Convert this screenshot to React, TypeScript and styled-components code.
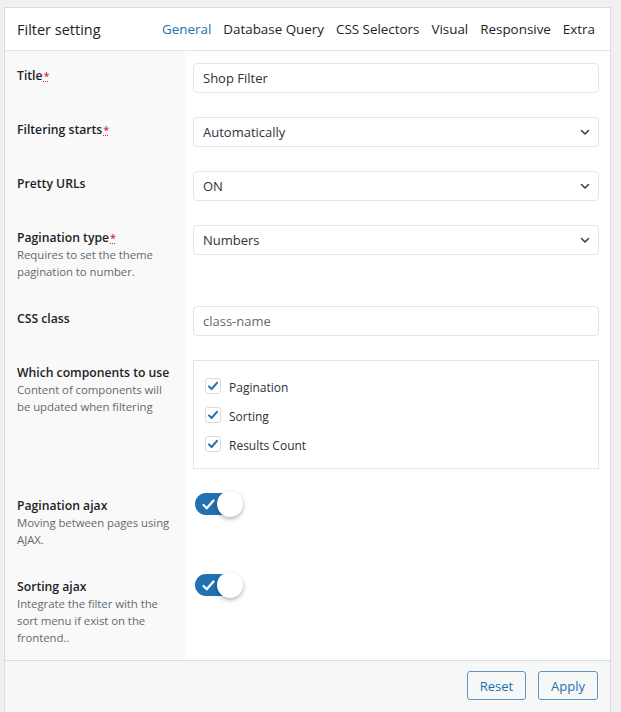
import React from 'react';
import styled, { createGlobalStyle } from 'styled-components';

const GlobalStyle = createGlobalStyle`
  body {
    margin: 0;
    background: #f0f0f1;
    font-family: "Open Sans", "Noto Sans", sans-serif;
    color: #1d2327;
  }
`;

const tabs = ['General', 'Database Query', 'CSS Selectors', 'Visual', 'Responsive', 'Extra'];

const Chevron = () => (
  <svg width="12" height="12" viewBox="0 0 12 12" fill="none">
    <path d="M2.5 4.5 6 8l3.5-3.5" stroke="#3c434a" strokeWidth="1.6" strokeLinecap="round" strokeLinejoin="round" />
  </svg>
);

const Check = ({ size = 12, weight = 2 }: { size?: number; weight?: number }) => (
  <svg width={size} height={size} viewBox="0 0 12 12" fill="none">
    <path d="M2 6.4 4.6 9 10 2.8" stroke="currentColor" strokeWidth={weight} strokeLinecap="round" strokeLinejoin="round" />
  </svg>
);

const Required = () => <Asterisk title="required">*</Asterisk>;

const App: React.FC = () => {
  return (
    <>
      <GlobalStyle />
      <Panel>
        <Header>
          <PanelTitle>Filter setting</PanelTitle>
          <Tabs>
            {tabs.map((t, i) => (
              <Tab key={t} active={i === 0}>{t}</Tab>
            ))}
          </Tabs>
        </Header>

        <Body>
          <Row>
            <LabelCell>
              <Label>Title<Required /></Label>
            </LabelCell>
            <FieldCell>
              <Input>Shop Filter</Input>
            </FieldCell>
          </Row>

          <Row>
            <LabelCell>
              <Label>Filtering starts<Required /></Label>
            </LabelCell>
            <FieldCell>
              <Select>Automatically<Chevron /></Select>
            </FieldCell>
          </Row>

          <Row>
            <LabelCell>
              <Label>Pretty URLs</Label>
            </LabelCell>
            <FieldCell>
              <Select>ON<Chevron /></Select>
            </FieldCell>
          </Row>

          <Row>
            <LabelCell>
              <Label>Pagination type<Required /></Label>
              <Description>Requires to set the theme pagination to number.</Description>
            </LabelCell>
            <FieldCell>
              <Select>Numbers<Chevron /></Select>
            </FieldCell>
          </Row>

          <Row>
            <LabelCell>
              <Label>CSS class</Label>
            </LabelCell>
            <FieldCell>
              <Input placeholder>class-name</Input>
            </FieldCell>
          </Row>

          <Row>
            <LabelCell>
              <Label>Which components to use</Label>
              <Description>Content of components will be updated when filtering</Description>
            </LabelCell>
            <FieldCell>
              <CheckGroup>
                {['Pagination', 'Sorting', 'Results Count'].map((c) => (
                  <CheckItem key={c}>
                    <CheckBox><Check /></CheckBox>
                    {c}
                  </CheckItem>
                ))}
              </CheckGroup>
            </FieldCell>
          </Row>

          <Row>
            <LabelCell>
              <Label>Pagination ajax</Label>
              <Description>Moving between pages using AJAX.</Description>
            </LabelCell>
            <FieldCell>
              <Switch>
                <Check size={15} weight={1.8} />
                <Knob />
              </Switch>
            </FieldCell>
          </Row>

          <Row>
            <LabelCell>
              <Label>Sorting ajax</Label>
              <Description>Integrate the filter with the sort menu if exist on the frontend..</Description>
            </LabelCell>
            <FieldCell>
              <Switch>
                <Check size={15} weight={1.8} />
                <Knob />
              </Switch>
            </FieldCell>
          </Row>
        </Body>

        <Footer>
          <Button>Reset</Button>
          <Button>Apply</Button>
        </Footer>
      </Panel>
    </>
  );
};

const Panel = styled.div`
  margin: 7px 0 0 4px;
  width: 607px;
  box-sizing: border-box;
  background: #fff;
  border: 1px solid #dcdcde;
  border-bottom: none;
`;

const Header = styled.div`
  height: 42px;
  display: flex;
  align-items: center;
  padding: 0 15px 0 12px;
  border-bottom: 1px solid #e2e4e7;
`;

const PanelTitle = styled.h2`
  flex: 1;
  margin: 0;
  font-size: 14.5px;
  font-weight: 500;
  color: #1d2327;
`;

const Tabs = styled.nav`
  display: flex;
  gap: 12px;
`;

const Tab = styled.span<{ active?: boolean }>`
  font-size: 13.4px;
  color: ${(p) => (p.active ? '#2271b1' : '#1d2327')};
`;

const Body = styled.div``;

const Row = styled.div`
  display: grid;
  grid-template-columns: 180px 1fr;
`;

const LabelCell = styled.div`
  background: #f9f9f9;
  padding: 16px 8px 14px 12px;
`;

const Label = styled.div`
  font-size: 12.2px;
  font-weight: 600;
  line-height: 17px;
  height: 17px;
  color: #1d2327;
`;

const Asterisk = styled.abbr`
  color: #d63638;
  font-size: 11px;
  line-height: 1;
  text-decoration: underline dotted;
  margin-left: 1px;
`;

const Description = styled.div`
  font-size: 11.4px;
  line-height: 17px;
  letter-spacing: -0.05px;
  color: #646970;
`;

const FieldCell = styled.div`
  padding: 12px 11px 12px 8px;
`;

const Input = styled.div<{ placeholder?: boolean }>`
  height: 30px;
  box-sizing: border-box;
  display: flex;
  align-items: center;
  justify-content: space-between;
  padding: 0 9px 0 9px;
  border: 1px solid #e4e5e7;
  border-radius: 4px;
  font-size: 13px;
  color: ${(p) => (p.placeholder ? '#646970' : '#2c3338')};
`;

const Select = styled(Input)`
  padding-right: 7px;
`;

const CheckGroup = styled.div`
  border: 1px solid #e4e5e7;
  padding: 12px 12px 8px 11px;
`;

const CheckItem = styled.div`
  height: 29px;
  display: flex;
  align-items: center;
  gap: 8px;
  font-size: 12px;
  color: #2c3338;
`;

const CheckBox = styled.span`
  width: 16px;
  height: 16px;
  box-sizing: border-box;
  border: 1px solid #dcdcde;
  border-radius: 3px;
  background: #fff;
  display: flex;
  align-items: center;
  justify-content: center;
  color: #2271b1;
  margin-top: -4px;
`;

const Switch = styled.span`
  display: inline-flex;
  align-items: center;
  width: 44px;
  height: 22px;
  box-sizing: border-box;
  margin: 0 0 0 2px;
  padding-left: 6px;
  border-radius: 11px;
  background: #2271b1;
  color: #fff;
`;

const Knob = styled.span`
  width: 26px;
  height: 26px;
  border-radius: 50%;
  background: #fff;
  margin-left: auto;
  margin-right: -4px;
  box-shadow: 0 2px 4px rgba(0, 0, 0, 0.3);
`;

const Footer = styled.div`
  display: flex;
  justify-content: flex-end;
  gap: 12px;
  padding: 10px 12px 12px;
  background: #f6f7f7;
  border-top: 1px solid #dcdcde;
`;

const Button = styled.button`
  height: 29px;
  padding: 0 12px;
  border: 1px solid #5d95c8;
  border-radius: 3px;
  background: #f6f7f7;
  color: #2271b1;
  font-family: inherit;
  font-size: 13px;
`;

export default App;
